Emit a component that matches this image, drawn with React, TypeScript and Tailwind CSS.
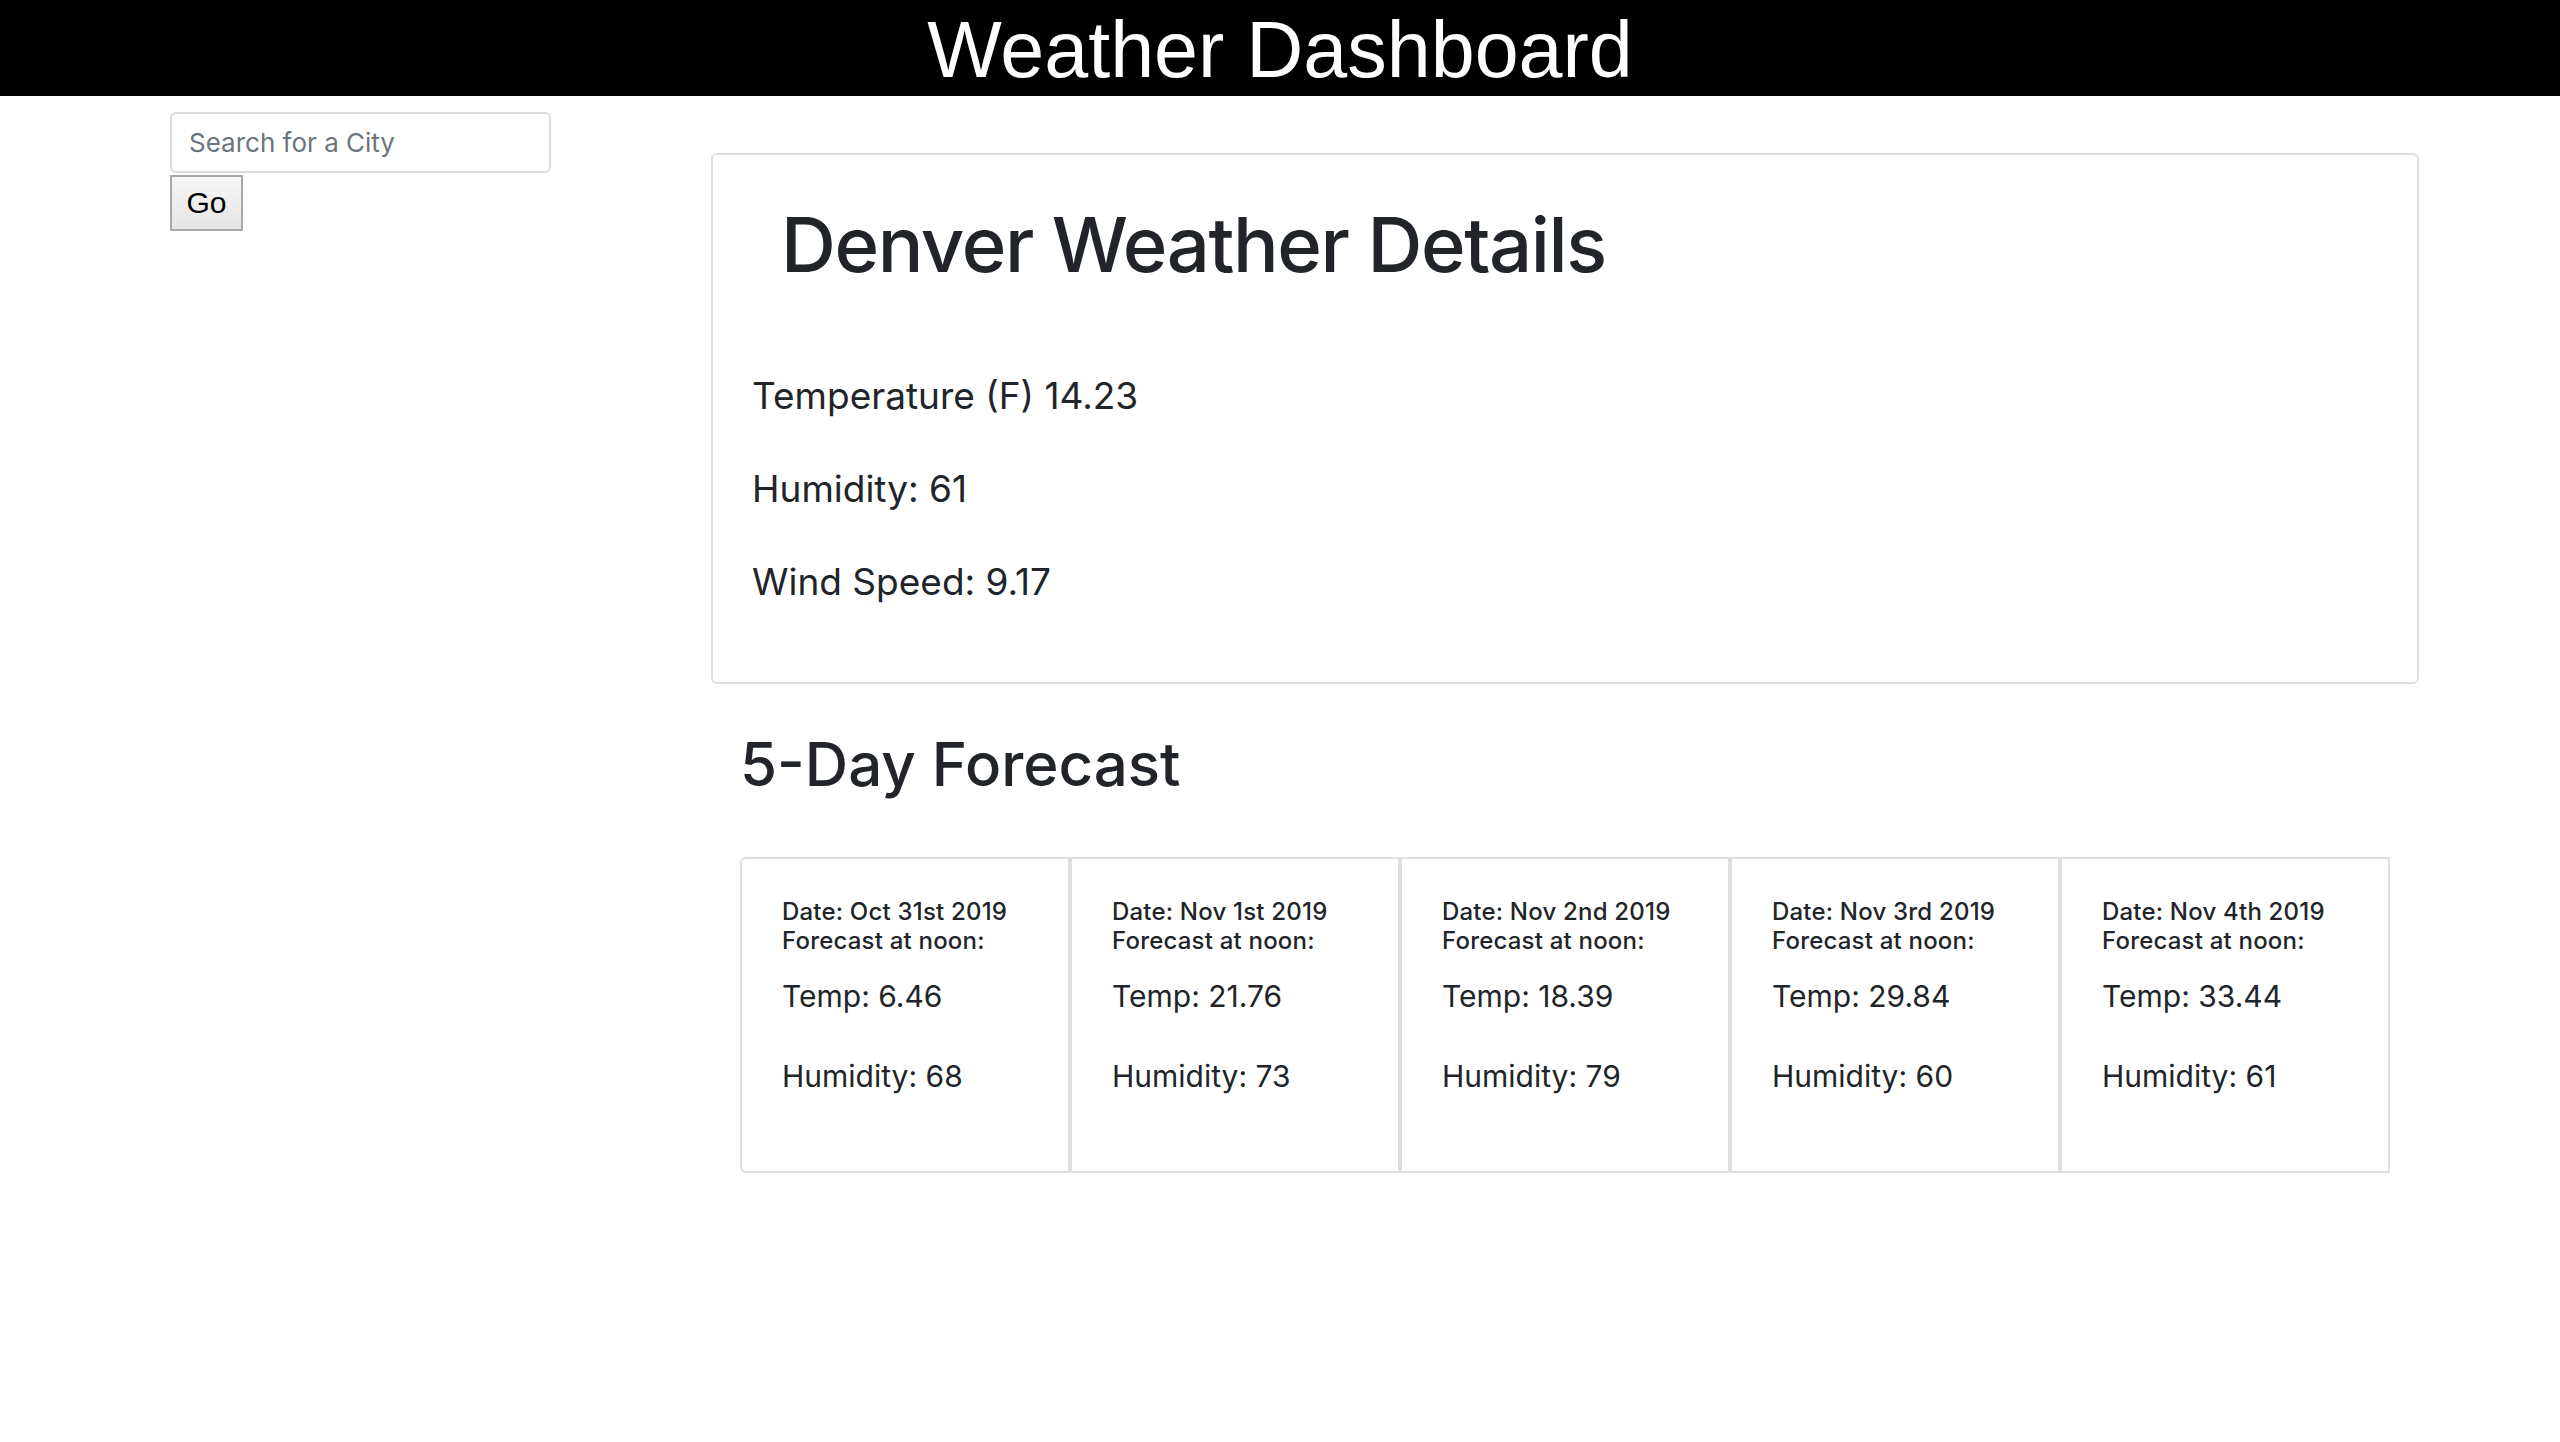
const forecast = [
  { date: "Oct 31st 2019", temp: "6.46", humidity: "68" },
  { date: "Nov 1st 2019", temp: "21.76", humidity: "73" },
  { date: "Nov 2nd 2019", temp: "18.39", humidity: "79" },
  { date: "Nov 3rd 2019", temp: "29.84", humidity: "60" },
  { date: "Nov 4th 2019", temp: "33.44", humidity: "61" },
];

function App() {
  return (
    <div className="min-h-screen bg-white font-['Inter',sans-serif] text-[#212529]">
      {/* Header */}
      <header className="h-[96px] overflow-hidden bg-black text-center">
        <h1 className="font-['Liberation_Sans',Arial,sans-serif] text-[79px] leading-[100px] text-white">
          Weather Dashboard
        </h1>
      </header>

      <div className="flex">
        {/* Search column */}
        <div className="w-[711px] shrink-0 pl-[170px] pt-[16px]">
          <input
            type="text"
            placeholder="Search for a City"
            className="block h-[61px] w-[381px] rounded-[6px] border-2 border-[#d9dde2] px-[17px] text-[26px] placeholder:text-[#6c757d] outline-none"
          />
          <button className="mt-[2px] block h-[56px] w-[73px] border-2 border-[#a9a9a9] bg-linear-to-b from-[#f7f7f7] to-[#e4e4e4] font-['Liberation_Sans',Arial,sans-serif] text-[30px] leading-none text-black">
            Go
          </button>
        </div>

        {/* Weather column */}
        <div className="w-[1708px] pt-[57px]">
          <div className="rounded-[6px] border-2 border-[#dfdfdf] pb-[73px] pl-[39px] pt-[44px]">
            <h2 className="pl-[29px] text-[76px] font-medium leading-[1.2] tracking-[-1.4px]">
              Denver Weather Details
            </h2>
            <div className="mt-[79px] flex flex-col gap-[39px] text-[37px] leading-[54px]">
              <p>Temperature (F) 14.23</p>
              <p>Humidity: 61</p>
              <p>Wind Speed: 9.17</p>
            </div>
          </div>

          <div className="pl-[29px]">
            <h2 className="mt-[44px] text-[60px] font-medium leading-[72px]">5-Day Forecast</h2>
            <div className="mt-[57px] flex">
              {forecast.map((day, i) => (
                <div
                  key={day.date}
                  className={
                    i === 0
                      ? "h-[316px] w-[330px] rounded-l-[6px] border-2 border-[#dfdfdf] pl-[40px] pt-[39px]"
                      : "h-[316px] w-[330px] border-2 border-[#dfdfdf] pl-[40px] pt-[39px]"
                  }
                >
                  <h6 className="text-[24px] font-medium leading-[28.8px] tracking-[0.2px]">
                    Date: {day.date}
                    <br />
                    Forecast at noon:
                  </h6>
                  <p className="mt-[22px] text-[30px] leading-[36px]">Temp: {day.temp}</p>
                  <p className="mt-[44px] text-[30px] leading-[36px]">Humidity: {day.humidity}</p>
                </div>
              ))}
            </div>
          </div>
        </div>
      </div>
    </div>
  );
}

export default App;
